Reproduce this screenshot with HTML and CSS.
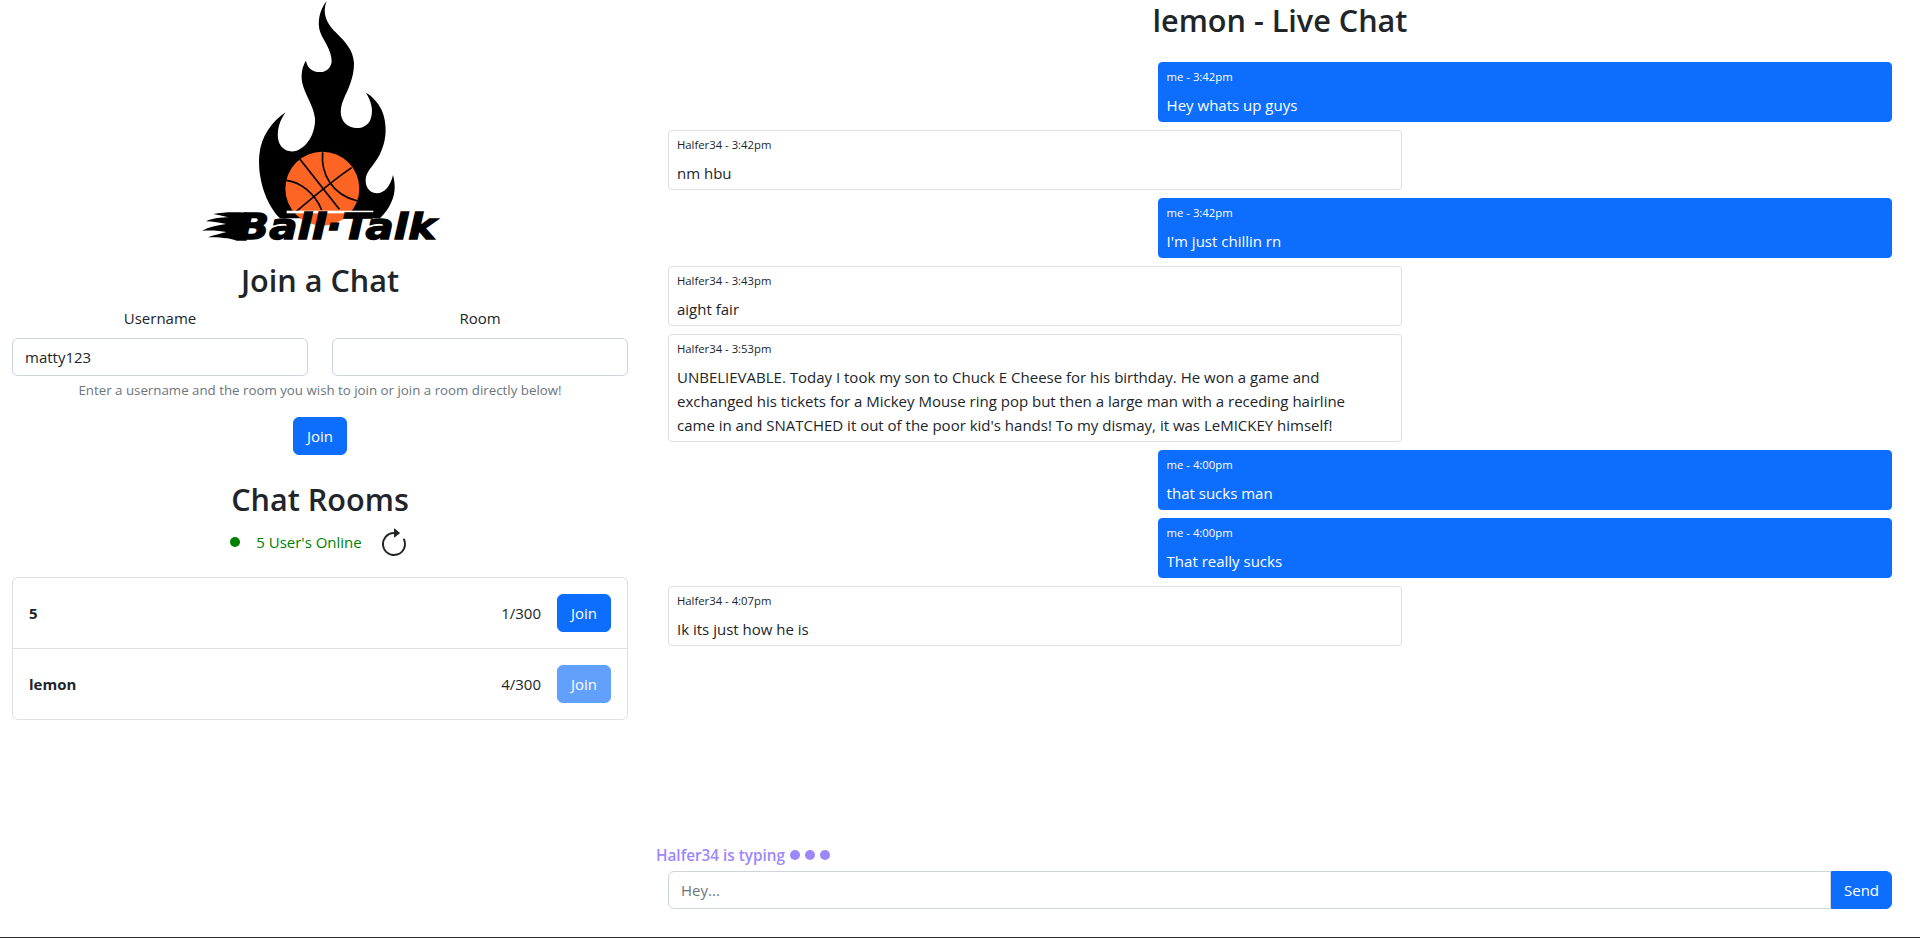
FILE: index.html
```html
<!DOCTYPE html>
<html lang="en">
<head>
  <meta charset="UTF-8" />
  <meta name="viewport" content="width=device-width, initial-scale=1" />
  <title>BallTalk</title>
  <link rel="stylesheet" href="styles.css">
</head>
<body>
  <div class="page">
    <div class="left">
      <svg class="logo" viewBox="0 0 840 780" width="280" height="260">
        <path d="M440 3C418 30 410 70 422 100C432 125 455 150 455 185C452 205 438 216 420 216C398 216 382 205 378 182C366 200 362 225 367 250C375 285 400 315 405 355C407 395 385 440 350 452C322 460 298 445 294 415C291 385 300 360 317 337C275 365 243 410 238 465C232 530 255 610 300 655L600 655C630 625 645 590 644 560C644 548 642 535 639 525C632 555 615 580 590 580C565 578 553 555 558 530C565 505 590 490 605 450C620 415 622 370 605 330C595 308 578 290 558 278C575 305 582 335 570 362C555 390 515 390 495 370C478 350 480 325 490 300C505 265 522 235 522 190C520 150 495 125 470 100C440 72 425 40 440 3Z" fill="#000"/>
        <circle cx="427" cy="566" r="111" fill="#fe6524"/>
        <g fill="none" stroke="#000" stroke-width="5">
          <path d="M360 478L478 628"/>
          <path d="M515 503C460 540 395 595 340 642"/>
          <path d="M428 457C422 520 455 585 533 603"/>
          <path d="M318 541C360 545 405 580 425 630"/>
        </g>
        <rect x="320" y="632" width="260" height="8" fill="#fff"/>
        <path d="M200 638C160 636 130 636 100 642C115 645 130 648 145 652C125 652 100 654 78 664C100 665 120 668 138 672C115 676 90 680 66 692C95 690 120 692 140 696C125 700 100 706 84 712C115 712 150 714 170 722L200 722Z" fill="#000"/>
        <text class="logo-text" x="172" y="718" textLength="596" lengthAdjust="spacingAndGlyphs">Ball·Talk</text>
      </svg>

      <h2 class="heading join-heading">Join a Chat</h2>
      <form class="join-form">
        <div class="fields">
          <div class="field">
            <label for="username">Username</label>
            <input class="input" type="text" id="username" value="matty123" />
          </div>
          <div class="field">
            <label for="room">Room</label>
            <input class="input" type="text" id="room" />
          </div>
        </div>
        <p class="help">Enter a username and the room you wish to join or join a room directly below!</p>
        <button type="button" class="btn join-btn">Join</button>
      </form>

      <h2 class="heading rooms-heading">Chat Rooms</h2>
      <div class="online">
        <span class="online-dot"></span>
        <span class="online-text">5 User's Online</span>
        <svg class="refresh" viewBox="0 0 16 16" width="32" height="32" fill="#212529">
          <path fill-rule="evenodd" d="M8 3a5 5 0 1 0 4.546 2.914.5.5 0 0 1 .908-.417A6 6 0 1 1 8 2z"/>
          <path d="M8 4.466V.534a.25.25 0 0 1 .41-.192l2.36 1.966c.12.1.12.284 0 .384L8.41 4.658A.25.25 0 0 1 8 4.466"/>
        </svg>
      </div>

      <ul class="rooms">
        <li class="room">
          <strong class="room-name">5</strong>
          <span class="room-count">1/300</span>
          <button type="button" class="btn">Join</button>
        </li>
        <li class="room">
          <strong class="room-name">lemon</strong>
          <span class="room-count">4/300</span>
          <button type="button" class="btn disabled">Join</button>
        </li>
      </ul>
    </div>

    <div class="right">
      <h2 class="heading chat-title">lemon - Live Chat</h2>
      <div class="messages">
        <div class="msg mine"><div class="msg-meta">me - 3:42pm</div><div>Hey whats up guys</div></div>
        <div class="msg"><div class="msg-meta">Halfer34 - 3:42pm</div><div>nm hbu</div></div>
        <div class="msg mine"><div class="msg-meta">me - 3:42pm</div><div>I'm just chillin rn</div></div>
        <div class="msg"><div class="msg-meta">Halfer34 - 3:43pm</div><div>aight fair</div></div>
        <div class="msg"><div class="msg-meta">Halfer34 - 3:53pm</div><div>UNBELIEVABLE. Today I took my son to Chuck E Cheese for his birthday. He won a game and exchanged his tickets for a Mickey Mouse ring pop but then a large man with a receding hairline<br>came in and SNATCHED it out of the poor kid's hands! To my dismay, it was LeMICKEY himself!</div></div>
        <div class="msg mine"><div class="msg-meta">me - 4:00pm</div><div>that sucks man</div></div>
        <div class="msg mine"><div class="msg-meta">me - 4:00pm</div><div>That really sucks</div></div>
        <div class="msg"><div class="msg-meta">Halfer34 - 4:07pm</div><div>Ik its just how he is</div></div>
      </div>
      <div class="typing">
        <span>Halfer34 is typing</span>
        <span class="typing-dot"></span>
        <span class="typing-dot"></span>
        <span class="typing-dot"></span>
      </div>
      <div class="send-row">
        <input class="input send-input" type="text" placeholder="Hey..." />
        <button type="button" class="btn send-btn">Send</button>
      </div>
    </div>
  </div>
  <div class="bottom-line"></div>
</body>
</html>
```

FILE: styles.css
```css
* {
  box-sizing: border-box;
}
body {
  margin: 0;
  height: 938px;
  display: flex;
  flex-direction: column;
  overflow: hidden;
  background: #fff;
  color: #212529;
  font-family: "Open Sans", "Noto Sans", sans-serif;
  font-size: 15px;
  line-height: 24px;
}
.page {
  flex: 1;
  display: flex;
  min-height: 0;
}
.left {
  width: 640px;
  padding: 0 12px;
  text-align: center;
}
.right {
  width: 1280px;
  padding: 0 28px 28px;
  display: flex;
  flex-direction: column;
}
.logo {
  display: block;
  margin: 0 auto;
}
.logo-text {
  font-family: "DejaVu Sans", sans-serif;
  font-size: 104px;
  font-weight: bold;
  font-style: italic;
  fill: #000;
  stroke: #000;
  stroke-width: 4px;
}
.heading {
  margin: 0 0 8px;
  font-size: 30.6px;
  font-weight: 600;
  line-height: 38px;
}
.join-heading {
  margin: 1px 0 7px;
}
.fields {
  display: flex;
  gap: 24px;
}
.field {
  flex: 1;
}
label {
  display: block;
  margin-bottom: 8px;
}
.input {
  display: block;
  width: 100%;
  height: 38px;
  padding: 6px 12px;
  border: 1px solid #ced4da;
  border-radius: 6px;
  font: inherit;
  color: #212529;
  outline: none;
}
.input::placeholder {
  color: #6c757d;
}
.help {
  margin: 4px 0 16px;
  font-size: 13.3px;
  line-height: 21px;
  color: #6c757d;
}
.btn {
  height: 38px;
  width: 54px;
  padding: 0;
  border: 1px solid #0d6efd;
  border-radius: 6px;
  background: #0d6efd;
  color: #fff;
  font: inherit;
}
.btn.disabled {
  opacity: .65;
}
.join-btn {
  display: block;
  margin: 0 auto;
}
.rooms-heading {
  margin: 25px 0 0;
}
.online {
  height: 59px;
  padding-bottom: 11px;
  display: flex;
  align-items: center;
  justify-content: center;
  color: #008000;
}
.online-dot {
  width: 10px;
  height: 10px;
  border-radius: 50%;
  background: #008000;
  margin-right: 16px;
}
.online-text {
  margin-right: 16px;
}
.refresh {
  margin-top: 4px;
}
.rooms {
  list-style: none;
  margin: 0;
  padding: 0;
  border: 1px solid #dfdfdf;
  border-radius: 6px;
}
.room {
  display: flex;
  align-items: center;
  height: 70px;
  padding: 0 16px;
  text-align: left;
}
.room + .room {
  height: 71px;
  border-top: 1px solid #dfdfdf;
}
.room-name {
  flex: 1;
}
.room-count {
  margin-right: 16px;
}
.chat-title {
  margin: 1px 0 0;
  text-align: center;
}
.messages {
  flex: 1;
  margin-top: 23px;
  display: flex;
  flex-direction: column;
  gap: 8px;
}
.msg {
  width: 60%;
  padding: 4px 8px;
  border: 1px solid #dfdfdf;
  border-radius: 4px;
}
.msg.mine {
  align-self: flex-end;
  border-color: #0d6efd;
  background: #0d6efd;
  color: #fff;
}
.msg-meta {
  margin-bottom: 6px;
  font-size: 11.3px;
  line-height: 20px;
}
.typing {
  display: flex;
  align-items: center;
  gap: 5px;
  margin: 0 0 4px -12px;
  font-size: 15.3px;
  font-weight: 600;
  color: #9d87fb;
}
.typing-dot {
  width: 10px;
  height: 10px;
  border-radius: 50%;
  background: #9d87fb;
}
.send-row {
  display: flex;
}
.send-input {
  flex: 1;
  border-radius: 6px 0 0 6px;
}
.send-btn {
  width: 61px;
  border-radius: 0 6px 6px 0;
}
.bottom-line {
  height: 1px;
  background: #2b2b2b;
}
```
